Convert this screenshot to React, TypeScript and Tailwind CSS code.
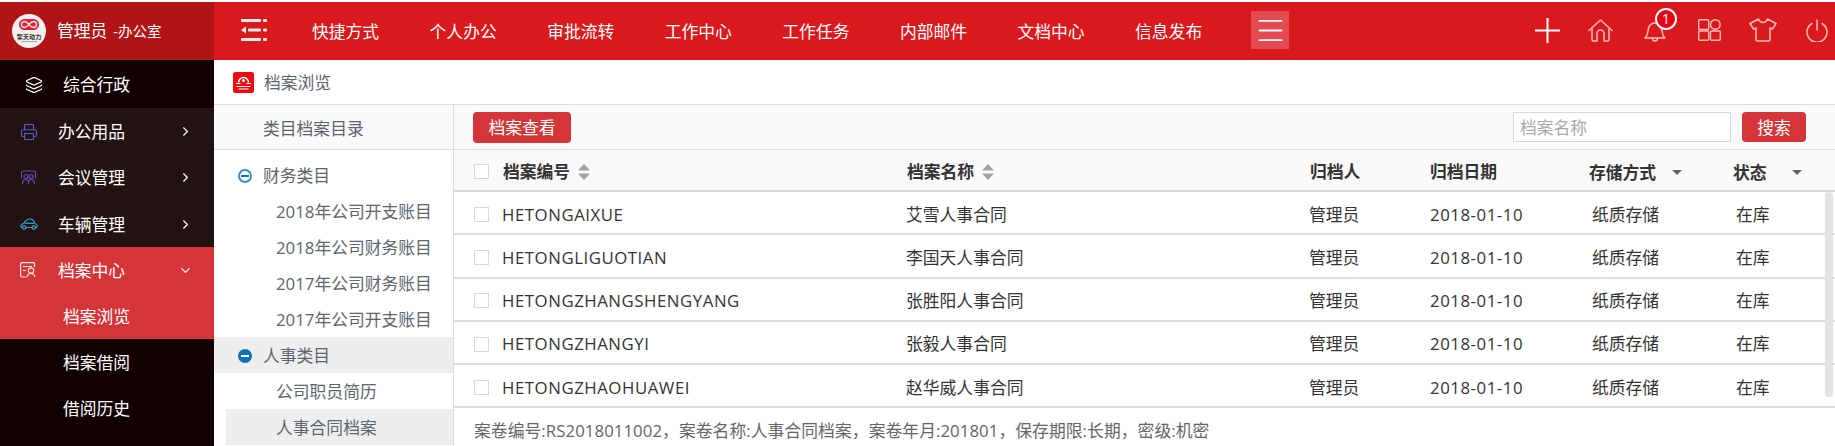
import type { ReactNode } from 'react'
import { ChevronDown, ChevronRight, Layers, Menu, Printer } from 'lucide-react'

const NAV_ITEMS = ['快捷方式', '个人办公', '审批流转', '工作中心', '工作任务', '内部邮件', '文档中心', '信息发布']

const ROWS = [
  { code: 'HETONGAIXUE', name: '艾雪人事合同' },
  { code: 'HETONGLIGUOTIAN', name: '李国天人事合同' },
  { code: 'HETONGZHANGSHENGYANG', name: '张胜阳人事合同' },
  { code: 'HETONGZHANGYI', name: '张毅人事合同' },
  { code: 'HETONGZHAOHUAWEI', name: '赵华威人事合同' },
]

function SortIcon() {
  return (
    <svg width="12" height="16" viewBox="0 0 12 16" className="ml-2 fill-[#a3a3a3]">
      <path d="M6 0 12 6.5H0Z" />
      <path d="M0 9.5H12L6 16Z" />
    </svg>
  )
}

function Logo() {
  return (
    <svg width="34" height="34" viewBox="0 0 34 34">
      <circle cx="17" cy="17" r="17" fill="#f2efef" />
      <rect x="7" y="5" width="20" height="11" rx="5.500" fill="#d7263a" />
      <path d="M17 10.500c-2-2.500-3-3-4.500-3a3 3 0 0 0 0 6c1.500 0 2.500-.5 4.500-3s3-3 4.500-3a3 3 0 0 1 0 6c-1.500 0-2.500-.5-4.500-3Z" fill="none" stroke="#f8dfe2" strokeWidth="1.300" />
      <text x="17" y="24.500" textAnchor="middle" fontSize="6.200" fontWeight="700" fill="#333333">擎天动力</text>
      <rect x="9" y="27" width="16" height="1" fill="#a8a8a8" />
    </svg>
  )
}

function MeetingIcon() {
  return (
    <svg width="17" height="15" viewBox="0 0 17 15" fill="none" stroke="#5b4fb5" strokeWidth="1.200">
      <path d="M2 8H1.500V2.500A1.500 1.500 0 0 1 3 1h11a1.500 1.500 0 0 1 1.500 1.500V8H15" />
      <circle cx="6" cy="6.500" r="2" />
      <circle cx="11" cy="6.500" r="2" />
      <path d="M2.500 14c0-3 1.500-4.500 3.500-4.500S8.500 11 8.500 14c0-3 .5-4.500 2.500-4.500s3.500 1.500 3.500 4.500" />
    </svg>
  )
}

function CarIcon() {
  return (
    <svg width="18" height="12" viewBox="0 0 18 12" fill="none" stroke="#36a3d9" strokeWidth="1.200">
      <path d="M2.500 9.500H1.500C.8 9.500.6 8.800.8 8c.3-1.500 1.700-2.200 3.200-2.700C5.500 2.500 7.500 1 10 1c2.500 0 4 1.700 4.800 4.300 1.500.5 2.500 1.300 2.500 3 0 .8-.3 1.200-1 1.200h-.8M6 9.500h6" />
      <path d="M5 5.300h9" />
      <circle cx="4.200" cy="9.500" r="1.700" />
      <circle cx="13.800" cy="9.500" r="1.700" />
    </svg>
  )
}

function ArchiveIcon() {
  return (
    <svg width="17" height="16" viewBox="0 0 17 16" fill="none" stroke="#fbe4e4" strokeWidth="1.200">
      <path d="M6.500 15H2A1.500 1.500 0 0 1 .6 13.500V2A1.500 1.500 0 0 1 2 .6h11A1.500 1.500 0 0 1 14.500 2v3" />
      <path d="M3 4.500h9M3 8.500h3" />
      <circle cx="11" cy="8.500" r="2.700" />
      <path d="M7 15c.5-2 2-3.500 4-3.500s3.500 1.500 4 3.500" />
    </svg>
  )
}

function PlusIcon() {
  return (
    <svg width="25" height="25" viewBox="0 0 25 25" fill="none" stroke="#ffffff" strokeWidth="2">
      <path d="M12.500 0v25M0 12.500h25" />
    </svg>
  )
}

function HomeIcon() {
  return (
    <svg width="25" height="23" viewBox="0 0 25 23" fill="none" stroke="#f6bcbc" strokeWidth="1.500" strokeLinecap="round" strokeLinejoin="round">
      <path d="M1 11.500 12.500 1 24 11.500" />
      <path d="M4 10v10.500A1.500 1.500 0 0 0 5.500 22H9v-7.500a3.500 3.500 0 0 1 7 0V22h3.500a1.500 1.500 0 0 0 1.500-1.500V10" />
    </svg>
  )
}

function BellIcon() {
  return (
    <svg width="22" height="21" viewBox="0 0 22 21" fill="none" stroke="#f6bcbc" strokeWidth="1.400" strokeLinecap="round" strokeLinejoin="round">
      <path d="M1 17c2-1.500 2.500-3 2.800-6C4.200 5.500 7 2 11 2s6.800 3.500 7.200 9c.3 3 .8 4.500 2.800 6Z" />
      <path d="M8.500 17.500a2.500 2.500 0 0 0 5 0" />
    </svg>
  )
}

function TileIcon() {
  return (
    <svg width="23" height="22" viewBox="0 0 23 22" fill="none" stroke="#f6bcbc" strokeWidth="1.400">
      <rect x=".7" y=".7" width="10" height="9.800" rx="1" />
      <circle cx="17.300" cy="5.500" r="4.800" />
      <rect x=".7" y="12" width="10" height="9.300" rx="1" />
      <rect x="12.500" y="12" width="9.800" height="9.300" rx="1" />
    </svg>
  )
}

function ShirtIcon() {
  return (
    <svg width="28" height="24" viewBox="0 0 28 24" fill="none" stroke="#f6bcbc" strokeWidth="1.500" strokeLinejoin="round">
      <path d="M9.500 1C10.500 3.500 12 4.500 14 4.500S17.500 3.500 18.500 1L27 5.500 23.500 11 21 10v11.500a1.500 1.500 0 0 1-1.500 1.500h-11A1.500 1.500 0 0 1 7 21.500V10l-2.500 1L1 5.500Z" />
    </svg>
  )
}

function PowerIcon() {
  return (
    <svg width="22" height="23" viewBox="0 0 22 23" fill="none" stroke="#f6bcbc" strokeWidth="1.500" strokeLinecap="round">
      <path d="M11 1v10" />
      <path d="M6 4.500a10 10 0 1 0 10 0" />
    </svg>
  )
}

function BreadcrumbIcon() {
  return (
    <svg width="21" height="21" viewBox="0 0 21 21">
      <rect width="21" height="21" rx="2.500" fill="#ee0a10" />
      <path d="M5.500 10.500a5 5 0 0 1 10 0" fill="none" stroke="#fff" strokeWidth="1.500" />
      <circle cx="10.500" cy="8.500" r="1.500" fill="#fff" />
      <path d="M3 11.500h4.500M13.500 11.500H18M3.500 14.500h14M5.500 17h10" stroke="#fff" strokeWidth="1.200" />
    </svg>
  )
}

function ShrinkIcon() {
  return (
    <svg width="26" height="22" viewBox="0 0 26 22" fill="#fdeaea">
      <rect x="0" y="0" width="20" height="3" rx="1" />
      <rect x="22" y="0" width="4" height="3" rx="1" />
      <path d="M0 11 5 7.500v7Z" />
      <rect x="7" y="9.500" width="13" height="3" rx="1" />
      <rect x="22" y="9.500" width="4" height="3" rx="1" />
      <rect x="0" y="19" width="20" height="3" rx="1" />
      <rect x="22" y="19" width="4" height="3" rx="1" />
    </svg>
  )
}

function MinusCircle({ solid }: { solid?: boolean }) {
  return (
    <span
      className={`flex h-[14px] w-[14px] items-center justify-center rounded-full border-2 ${
        solid ? 'border-[#0f72b8] bg-[#0f72b8]' : 'border-[#3b8ccb] bg-white'
      }`}
    >
      <span className={`h-[2px] w-[8px] ${solid ? 'bg-white' : 'bg-[#0f72b8]'}`} />
    </span>
  )
}

function SideRow({ icon, label }: { icon: ReactNode; label: string }) {
  return (
    <div className="flex h-[46.33px] items-center pl-5 pr-[21px] pt-px">
      <span className="flex w-[38px] shrink-0 items-center">{icon}</span>
      <span className="flex-1">{label}</span>
      <ChevronRight size={15} strokeWidth={1.8} />
    </div>
  )
}

function Sidebar() {
  return (
    <aside className="flex w-[214px] shrink-0 flex-col bg-[#120000] text-[16.8px] text-white">
      <div className="flex h-[58px] items-center bg-[#b01416] pl-3">
        <Logo />
        <span className="ml-[11px]">管理员</span>
        <span className="ml-[6px] pt-[2px] text-[14.5px]">-办公室</span>
      </div>
      <div className="flex h-[48px] items-center pl-[25px] pt-[2px]">
        <Layers size={18} strokeWidth={1.6} />
        <span className="ml-[20px]">综合行政</span>
      </div>
      <div className="bg-[#231212]">
        <SideRow icon={<Printer size={18} color="#5b5bc9" strokeWidth={1.5} />} label="办公用品" />
        <SideRow icon={<MeetingIcon />} label="会议管理" />
        <SideRow icon={<CarIcon />} label="车辆管理" />
      </div>
      <div className="bg-[#d43539]">
        <div className="flex h-[46px] items-center pl-5 pr-[21px] pt-px">
          <span className="flex w-[38px] shrink-0 items-center">
            <ArchiveIcon />
          </span>
          <span className="flex-1">档案中心</span>
          <ChevronDown size={15} strokeWidth={1.8} />
        </div>
        <div className="flex h-[46px] items-center pl-[63px] pt-px">档案浏览</div>
      </div>
      <div className="flex h-[46px] items-center pl-[63px] pt-px">档案借阅</div>
      <div className="flex h-[46px] items-center pl-[63px] pt-[2px]">借阅历史</div>
    </aside>
  )
}

function Header() {
  return (
    <header className="flex h-[58px] items-center bg-[#da191c] pb-[2px] pl-[27px] text-[16.8px] text-white">
      <ShrinkIcon />
      <nav className="ml-[45px] flex gap-[50.45px] pt-[4px]">
        {NAV_ITEMS.map((item) => (
          <span key={item}>{item}</span>
        ))}
      </nav>
      <span className="ml-[49px] flex h-[38px] w-[38px] items-center justify-center bg-[#e34b50]">
        <Menu size={33} strokeWidth={1.4} />
      </span>
      <div className="ml-auto flex items-center pr-[7px]">
        <PlusIcon />
        <span className="ml-[28px]">
          <HomeIcon />
        </span>
        <span className="relative ml-[31px] mt-[3px]">
          <BellIcon />
          <span className="absolute -right-[11px] -top-[13px] flex h-[22px] w-[22px] items-center justify-center rounded-full border-2 border-white bg-[#e60012] text-[14.5px] leading-none">
            1
          </span>
        </span>
        <span className="ml-[32px]">
          <TileIcon />
        </span>
        <span className="ml-[28px]">
          <ShirtIcon />
        </span>
        <span className="ml-[29px]">
          <PowerIcon />
        </span>
      </div>
    </header>
  )
}

function CategoryTree() {
  const leaf = 'flex h-9 items-center pl-[62px] pt-[2px]'
  return (
    <div className="w-[240px] shrink-0 border-r border-[#dcdcdc] text-[16.8px] text-[#5c6670]">
      <div className="flex h-[45px] items-center border-b border-[#dcdcdc] bg-[#fafafa] pl-[49px] pt-[4px]">类目档案目录</div>
      <div className="flex h-[43px] items-center gap-[11px] pl-[24px] pt-[9px]">
        <MinusCircle />
        财务类目
      </div>
      <div className={leaf}>2018年公司开支账目</div>
      <div className={leaf}>2018年公司财务账目</div>
      <div className={leaf}>2017年公司财务账目</div>
      <div className={leaf}>2017年公司开支账目</div>
      <div className="flex h-9 items-center gap-[11px] bg-[#eeeeee] pl-[24px] pt-[2px]">
        <MinusCircle solid />
        人事类目
      </div>
      <div className={leaf}>公司职员简历</div>
      <div className="ml-3 flex h-9 items-center bg-[#eeeeee] pl-[50px] pt-[2px]">人事合同档案</div>
    </div>
  )
}

function Checkbox() {
  return <span className="block h-[15px] w-[15px] border border-[#d8d8d8] bg-white" />
}

function ArchiveTable() {
  const cols = 'grid grid-cols-[453px_404px_119px_159px_144px_1fr] items-center'
  return (
    <div className="relative min-w-0 flex-1">
      <div className="flex h-[45px] items-center justify-between border-b border-[#dcdcdc] bg-[#fafafa] pl-[19px] pr-[29px] text-[16.8px] text-white">
        <button className="flex h-[31px] w-[98px] items-center justify-center rounded bg-[#d43539] pt-[2px]">档案查看</button>
        <div className="flex items-center gap-[11px]">
          <div className="flex h-[30px] w-[218px] items-center border border-[#d8d8d8] bg-white pl-[6px] pt-[2px] text-[#a9a9a9]">档案名称</div>
          <button className="flex h-[30px] w-[64px] items-center justify-center rounded-sm bg-[#d43539] pt-[2px]">搜索</button>
        </div>
      </div>
      <div className={`${cols} h-[42px] border-b-2 border-[#d9d9d9] bg-[#fafafa] pt-[3px] text-[16.8px] font-bold text-[#333333]`}>
        <div className="flex items-center pl-5">
          <Checkbox />
          <span className="ml-[14px]">档案编号</span>
          <SortIcon />
        </div>
        <div className="flex items-center">
          档案名称
          <SortIcon />
        </div>
        <div className="-ml-px">归档人</div>
        <div>归档日期</div>
        <div className="flex items-center pt-[2px]">
          存储方式
          <span className="ml-4 h-0 w-0 border-x-[5px] border-t-[5px] border-x-transparent border-t-[#666666]" />
        </div>
        <div className="flex items-center pt-[2px]">
          状态
          <span className="ml-[25px] h-0 w-0 border-x-[5px] border-t-[5px] border-x-transparent border-t-[#666666]" />
        </div>
      </div>
      {ROWS.map((row) => (
        <div key={row.code} className={`${cols} h-[43.3px] border-b-2 border-[#dddddd] bg-white pt-[3px] text-[16.8px] text-[#333333]`}>
          <div className="flex items-center pl-5">
            <Checkbox />
            <span className="ml-[13px] tracking-[0.55px]">{row.code}</span>
          </div>
          <div className="-ml-px">{row.name}</div>
          <div className="-ml-[2px]">管理员</div>
          <div className="tracking-[0.55px]">2018-01-10</div>
          <div className="pl-[3px]">纸质存储</div>
          <div className="pl-[3px]">在库</div>
        </div>
      ))}
      <div className="flex h-[37px] items-center pl-5 pt-[7px] text-[16.8px] tracking-[0.06px] text-[#666666]">
        案卷编号:RS2018011002，案卷名称:人事合同档案，案卷年月:201801，保存期限:长期，密级:机密
      </div>
      <span className="absolute right-[2px] top-[87px] h-[205px] w-[8px] rounded-sm bg-[#e3e3e3]" />
    </div>
  )
}

export default function App() {
  return (
    <div className="flex h-[446px] w-[1835px] overflow-hidden border-t-2 border-white bg-white font-['Open_Sans','Noto_Sans_CJK_SC',sans-serif]">
      <Sidebar />
      <main className="flex min-w-0 flex-1 flex-col">
        <Header />
        <div className="flex h-[45px] shrink-0 items-center gap-[10px] border-b border-[#dcdcdc] pl-[19px] text-[16.8px] text-[#5c6670]">
          <BreadcrumbIcon />
          <span className="pt-[2px]">档案浏览</span>
        </div>
        <div className="flex min-h-0 flex-1">
          <CategoryTree />
          <ArchiveTable />
        </div>
      </main>
    </div>
  )
}
